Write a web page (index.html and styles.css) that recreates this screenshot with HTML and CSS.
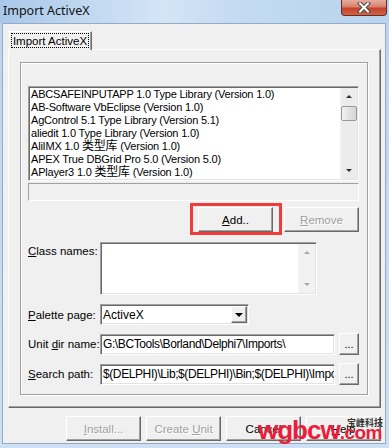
FILE: index.html
```html
<!DOCTYPE html>
<html lang="en">
<head>
  <meta charset="UTF-8" />
  <title>Import ActiveX</title>
  <link rel="stylesheet" href="styles.css">
</head>
<body>
  <div class="window">
    <div class="titlebar">
      <span class="title">Import ActiveX</span>
      <div class="close">
        <svg width="14" height="11" viewBox="0 0 14 11">
          <path d="M3 1.5 L11 9.5 M11 1.5 L3 9.5" stroke="#4a4a4a" stroke-width="4" stroke-linecap="square"/>
          <path d="M3 1.5 L11 9.5 M11 1.5 L3 9.5" stroke="#fff" stroke-width="2" stroke-linecap="square"/>
        </svg>
      </div>
    </div>

    <div class="client">
      <div class="tabs">
        <div class="tab"><span class="focus">Import ActiveX</span></div>
      </div>

      <div class="sheet">
        <div class="frame">
          <div class="listbox">
            <ul class="items">
              <li>ABCSAFEINPUTAPP 1.0 Type Library (Version 1.0)</li>
              <li>AB-Software VbEclipse (Version 1.0)</li>
              <li>AgControl 5.1 Type Library (Version 5.1)</li>
              <li>aliedit 1.0 Type Library (Version 1.0)</li>
              <li>AliIMX 1.0 <span class="cjk">类型库</span> (Version 1.0)</li>
              <li>APEX True DBGrid Pro 5.0 (Version 5.0)</li>
              <li>APlayer3 1.0 <span class="cjk">类型库</span> (Version 1.0)</li>
            </ul>
            <div class="vscroll">
              <div class="arrow up"></div>
              <div class="track"><div class="thumb"></div></div>
              <div class="arrow down"></div>
            </div>
          </div>

          <div class="status"></div>

          <div class="btnrow">
            <div class="marked">
              <button class="btn"><u>A</u>dd..</button>
              <div class="redbox"></div>
            </div>
            <button class="btn off"><u>R</u>emove</button>
          </div>

          <div class="row row-memo">
            <label class="lbl lbl-top"><u>C</u>lass names:</label>
            <div class="memo">
              <div class="vscroll flat">
                <div class="arrow up dim"></div>
                <div class="track"></div>
                <div class="arrow down dim"></div>
              </div>
            </div>
          </div>

          <div class="row row-combo">
            <label class="lbl"><u>P</u>alette page:</label>
            <div class="combo">
              <span class="value">ActiveX</span>
              <span class="dropbtn"></span>
            </div>
          </div>

          <div class="row row-edit">
            <label class="lbl">Unit <u>d</u>ir name:</label>
            <div class="edit">G:\BCTools\Borland\Delphi7\Imports\</div>
            <button class="btn dots">...</button>
          </div>

          <div class="row row-edit">
            <label class="lbl"><u>S</u>earch path:</label>
            <div class="edit">$(DELPHI)\Lib;$(DELPHI)\Bin;$(DELPHI)\Imports;$(DELPHI)\Projects\Bpl</div>
            <button class="btn dots">...</button>
          </div>
        </div>
      </div>

      <div class="footer">
        <button class="btn off"><u>I</u>nstall...</button>
        <button class="btn off">Create <u>U</u>nit</button>
        <button class="btn">Cancel</button>
        <button class="btn"><u>H</u>elp</button>
      </div>

      <div class="watermark">
        <span class="wm-cn">宝峰科技</span>
        <span class="wm-main">wgbcw</span><span class="wm-dot">.com</span>
      </div>
    </div>
  </div>
</body>
</html>
```

FILE: styles.css
```css
body {
  margin: 0;
  font-family: "Liberation Sans", "Noto Sans CJK SC", sans-serif;
  font-size: 11px;
  color: #000;
}
.window {
  width: 389px;
  height: 448px;
  overflow: hidden;
  background: linear-gradient(to bottom, #bcd4ee, #c6dbf1 60%, #cde0f4);
}
.titlebar {
  height: 23px;
  display: flex;
  background: linear-gradient(to right, #a9c7e9 0%, #c0d8f1 22%, #d4e5f6 42%, #c3daf2 62%, #b9d3ee 100%);
}
.title {
  font-family: "Noto Sans", sans-serif;
  font-size: 12.5px;
  line-height: 21px;
  padding-left: 3px;
  color: #111;
}
.close {
  margin-left: auto;
  margin-right: 2px;
  width: 44px;
  height: 15px;
  border: 1px solid #6a2a22;
  border-top: none;
  border-radius: 0 0 4px 4px;
  background: linear-gradient(to bottom, #e6ad9f, #d9806c 45%, #c3422d 55%, #cf6446);
  display: flex;
  align-items: center;
  justify-content: center;
}
.client {
  position: relative;
  margin-left: 2px;
  width: 384px;
  height: 421px;
  box-sizing: border-box;
  border: 1px solid #95abc5;
  background: #f0f0f0;
}
.tabs {
  display: flex;
  padding-top: 7px;
  padding-left: 6px;
}
.tab {
  position: relative;
  z-index: 1;
  width: 83px;
  height: 19px;
  margin-bottom: -1px;
  box-sizing: border-box;
  background: #f0f0f0;
  border-top: 1px solid #fff;
  border-left: 1px solid #fff;
  border-right: 1px solid #696969;
  box-shadow: inset -1px 0 0 #a0a0a0;
  padding: 1px 2px 0 1px;
}
.focus {
  display: block;
  height: 15px;
  line-height: 14px;
  font-size: 11.5px;
  text-align: center;
  box-sizing: border-box;
  border: 1px dotted #000;
}
.sheet {
  margin-left: 5px;
  width: 373px;
  height: 359px;
  box-sizing: border-box;
  border: 1px solid;
  border-color: #fff #696969 #696969 #fff;
  box-shadow: inset -1px -1px 0 #a0a0a0;
  padding: 12px 0 0 11px;
}
.frame {
  width: 348px;
  height: 333px;
  box-sizing: border-box;
  border: 1px solid #a0a0a0;
  box-shadow: 1px 1px 0 #fff, inset 1px 1px 0 #fff;
  padding: 23px 0 0 7px;
}

/* sunken boxes */
.listbox, .memo, .combo, .edit, .status {
  box-sizing: border-box;
  background: #fff;
  border: 1px solid;
  border-color: #a0a0a0 #fff #fff #a0a0a0;
  box-shadow: inset 1px 1px 0 #696969, inset -1px -1px 0 #e3e3e3;
  padding: 1px;
}
.listbox {
  width: 331px;
  height: 95px;
  display: flex;
}
.items {
  flex: 1;
  list-style: none;
  margin: 0;
  padding: 0 0 0 1px;
  overflow: hidden;
  font-size: 11px;
  letter-spacing: -0.2px;
}
.items li {
  height: 13px;
  line-height: 13px;
  white-space: nowrap;
}
.cjk {
  font-size: 12px;
}
.vscroll {
  width: 17px;
  display: flex;
  flex-direction: column;
  background: #ececec;
  border-left: 1px solid #f4f4f4;
  box-sizing: border-box;
}
.vscroll.flat {
  margin-left: auto;
  background: #f2f2f2;
}
.arrow {
  height: 17px;
  display: flex;
  align-items: center;
  justify-content: center;
}
.arrow::after {
  content: "";
  border-left: 3px solid transparent;
  border-right: 3px solid transparent;
}
.arrow.up::after {
  border-bottom: 3px solid #333;
}
.arrow.down::after {
  border-top: 3px solid #333;
}
.arrow.dim.up::after {
  border-bottom-color: #a8a8a8;
}
.arrow.dim.down::after {
  border-top-color: #a8a8a8;
}
.track {
  flex: 1;
}
.thumb {
  margin: 1px 0 0 0;
  height: 15px;
  border: 1px solid #979797;
  border-radius: 2px;
  box-sizing: border-box;
  background: linear-gradient(to right, #f3f3f3, #e2e2e2 50%, #d6d6d6);
}
.status {
  width: 331px;
  height: 18px;
  margin-top: 2px;
  background: #f0f0f0;
  box-shadow: none;
}

/* buttons */
.btn {
  width: 75px;
  height: 25px;
  padding: 0;
  box-sizing: border-box;
  font-family: inherit;
  font-size: 11.5px;
  color: #000;
  background: #f0f0f0;
  border: 1px solid;
  border-color: #fff #696969 #696969 #fff;
  box-shadow: inset -1px -1px 0 #a0a0a0;
}
.btn.off {
  color: #a0a0a0;
  text-shadow: 1px 1px 0 #fff;
}
.btnrow {
  width: 331px;
  margin-top: 6px;
  display: flex;
  justify-content: flex-end;
  gap: 11px;
}
.marked {
  position: relative;
  display: flex;
}
.redbox {
  position: absolute;
  left: -8px;
  right: -9px;
  top: -4px;
  bottom: -3px;
  border: 3px solid #f23b3b;
}

/* labelled rows */
.row {
  display: flex;
  align-items: center;
}
.lbl {
  width: 72px;
  white-space: nowrap;
  font-size: 11.5px;
}
.row-memo {
  margin-top: 10px;
  align-items: flex-start;
}
.lbl-top {
  padding-top: 3px;
}
.memo {
  width: 217px;
  height: 53px;
  display: flex;
}
.row-combo {
  margin-top: 9px;
}
.combo {
  width: 149px;
  height: 21px;
  display: flex;
  align-items: center;
}
.value {
  flex: 1;
  padding-left: 1px;
  font-size: 12px;
}
.dropbtn {
  width: 16px;
  height: 17px;
  box-sizing: border-box;
  border: 1px solid;
  border-color: #fff #696969 #696969 #fff;
  box-shadow: inset -1px -1px 0 #a0a0a0;
  background: #f0f0f0;
  display: flex;
  align-items: center;
  justify-content: center;
}
.dropbtn::after {
  content: "";
  border-left: 4px solid transparent;
  border-right: 4px solid transparent;
  border-top: 4px solid #000;
}
.row-edit {
  margin-top: 8px;
}
.edit {
  width: 235px;
  height: 21px;
  line-height: 17px;
  padding-left: 2px;
  white-space: nowrap;
  overflow: hidden;
  font-size: 12px;
  letter-spacing: -0.4px;
}
.btn.dots {
  width: 20px;
  height: 22px;
  margin-left: 4px;
  font-size: 11px;
}

.footer {
  margin-top: 8px;
  padding-right: 4px;
  display: flex;
  justify-content: flex-end;
  gap: 5px;
}

/* watermark drawn over the dialog */
.watermark {
  position: absolute;
  left: 255px;
  top: 391px;
  width: 130px;
  height: 30px;
  white-space: nowrap;
}
.wm-cn {
  position: absolute;
  left: 89px;
  top: 1px;
  font-family: "Noto Sans CJK SC", sans-serif;
  font-size: 9px;
  font-weight: bold;
  color: #333;
}
.wm-main, .wm-dot {
  font-family: "Liberation Sans", sans-serif;
  font-weight: bold;
  color: #ea1d3a;
}
.wm-main {
  font-size: 26px;
  letter-spacing: -1px;
  line-height: 30px;
}
.wm-dot {
  font-size: 19px;
  letter-spacing: -0.5px;
}
```
